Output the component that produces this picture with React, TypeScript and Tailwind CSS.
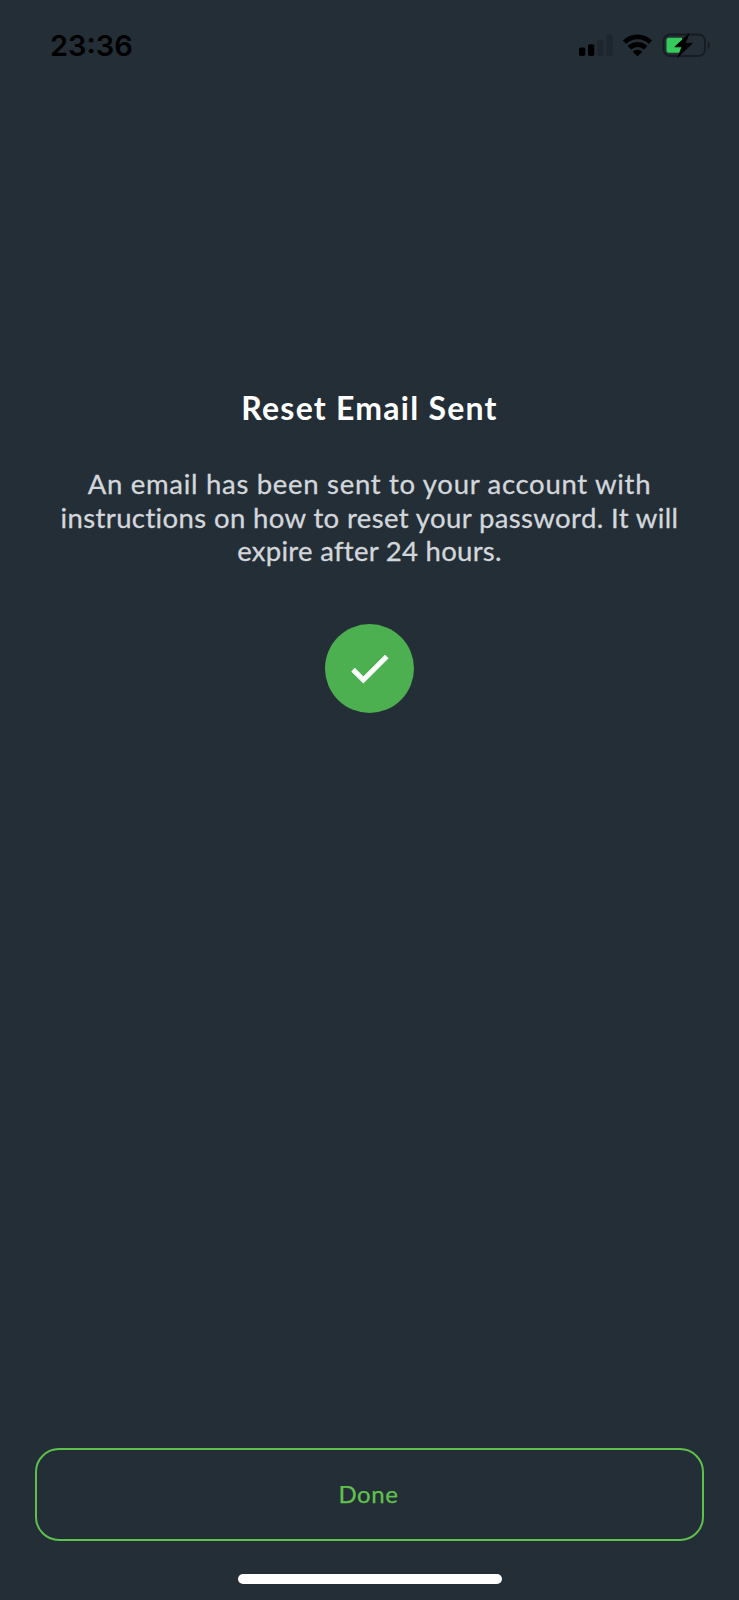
function StatusBar() {
  return (
    <header className="flex h-[92px] shrink-0 items-start justify-between pt-[33px] pr-[28px] pl-[50px] text-black">
      <span className="font-[Inter,sans-serif] text-[29px] leading-[25px] font-semibold">23:36</span>
      <div className="flex h-[25px] items-center gap-[9px]">
        <svg width="35" height="25" viewBox="0 0 35 25" fill="currentColor">
          <rect x="1" y="14.5" width="6.3" height="8.5" rx="1.8" />
          <rect x="10" y="11.2" width="6.3" height="11.8" rx="1.8" />
          <rect x="19.2" y="6.5" width="6.3" height="16.5" rx="1.8" opacity="0.18" />
          <rect x="28.4" y="1.8" width="6.3" height="21.2" rx="1.8" opacity="0.18" />
        </svg>
        <svg width="31" height="25" viewBox="0 0 31 25" fill="none" stroke="currentColor" strokeWidth="4.8">
          <path d="M2.6 9.3a18.2 18.2 0 0 1 25.8 0" />
          <path d="M7.4 14.8a11.6 11.6 0 0 1 16.2 0" />
          <path d="M15.5 23.6l-4.8-4.8a6.8 6.8 0 0 1 9.6 0z" fill="currentColor" stroke="none" />
        </svg>
        <svg width="49" height="25" viewBox="0 0 49 25">
          <rect x="1.5" y="1.5" width="41.5" height="21.5" rx="6.5" fill="none" stroke="#171c22" strokeWidth="2" />
          <path d="M45.8 8.5c2.8 1.2 2.8 6.3 0 7.5z" fill="#171c22" />
          <path d="M7 4.8H20v14.9H7a2.5 2.5 0 0 1-2.5-2.5V7.3A2.5 2.5 0 0 1 7 4.8z" fill="#35ca5c" />
          <path d="M27 0.8L12.8 13.8h7.2L15.8 24.2 30.3 10.3h-7.1z" fill="#000" stroke="#000" strokeWidth="0.8" strokeLinejoin="round" />
        </svg>
      </div>
    </header>
  );
}

export default function App() {
  return (
    <div className="flex h-[1600px] w-[739px] flex-col bg-[#242e37] font-[Lato,sans-serif]">
      <StatusBar />
      <main className="flex flex-1 flex-col items-center">
        <h1 className="mt-[296px] text-[32px] leading-[40px] font-bold tracking-[1.25px] whitespace-nowrap text-white">
          Reset Email Sent
        </h1>
        <p className="mt-[39px] flex flex-col items-center text-[27.5px] leading-[33.5px] whitespace-nowrap text-[#d3d7db] [-webkit-text-stroke:0.3px_#d3d7db]">
          <span className="tracking-[0.7px]">An email has been sent to your account with</span>
          <span className="tracking-[0.38px]">instructions on how to reset your password. It will</span>
          <span className="tracking-[0.28px]">expire after 24 hours.</span>
        </p>
        <div className="mt-[56px] flex size-[89px] items-center justify-center rounded-full bg-[#4caf50]">
          <svg width="49" height="49" viewBox="0 0 24 24" fill="#fff" stroke="#fff" strokeWidth="0.5">
            <path d="M9 16.17 4.83 12l-1.42 1.41L9 19 21 7l-1.41-1.41z" />
          </svg>
        </div>
      </main>
      <footer className="flex shrink-0 flex-col items-center px-[35px] pb-[16px]">
        <button className="flex h-[93px] w-full items-center justify-center rounded-[24px] border-2 border-[#5fc04d] pr-[2px] pb-[2px] text-[24px] tracking-[0.6px] text-[#62c14e] [-webkit-text-stroke:0.25px_#62c14e]">
          Done
        </button>
        <div className="mt-[33px] h-[10px] w-[264px] rounded-full bg-white" />
      </footer>
    </div>
  );
}
